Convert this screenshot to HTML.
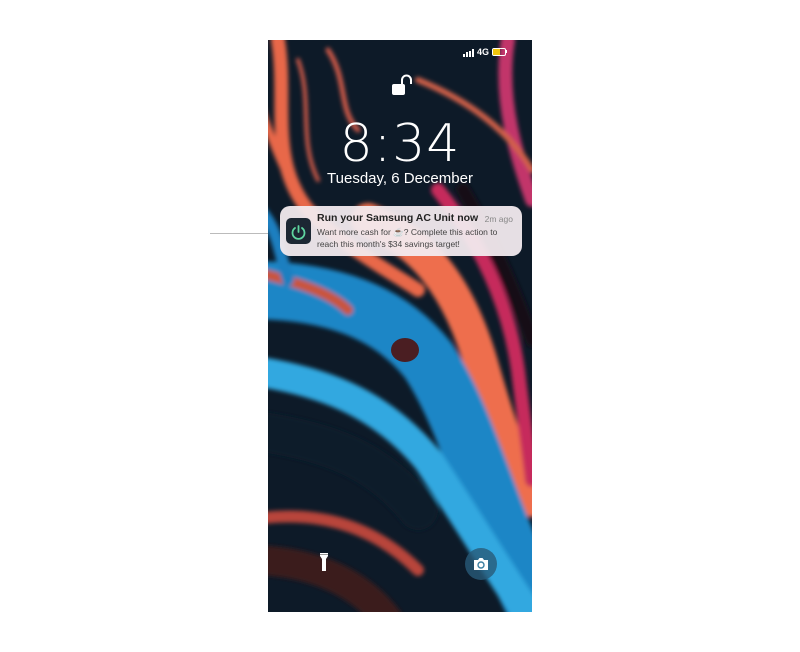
<!DOCTYPE html>
<html><head><style>
body{margin:0;width:800px;height:652px;background:#fff;position:relative;overflow:hidden;font-family:"Liberation Sans",sans-serif}
#ph{position:absolute;left:268px;top:40px;width:264px;height:572px;overflow:hidden;background:#0b1622}
.t{position:absolute;color:#fff;text-align:center;width:264px;left:0}
</style></head><body>
<div style="position:absolute;left:210px;top:233px;width:72px;height:1px;background:#bbb"></div>
<div id="ph">
<svg width="264" height="572" style="position:absolute;left:0;top:0">
<defs><filter id="b"><feGaussianBlur stdDeviation="2"/></filter></defs>
<rect width="264" height="572" fill="#0d1a28"/>
<g filter="url(#b)" fill="none" stroke-linecap="round">
<path d="M240 0 C230 60 250 120 264 160" stroke="#c2366a" stroke-width="14"/>
<path d="M10 0 C20 60 0 120 40 170 C80 210 120 230 150 250" stroke="#e8674a" stroke-width="14"/>
<path d="M-10 60 C10 120 30 170 70 200" stroke="#e8674a" stroke-width="8"/>
<path d="M30 20 C45 60 30 100 50 140" stroke="#d05a48" stroke-width="4"/>
<path d="M60 10 C80 40 70 70 90 90" stroke="#d05a48" stroke-width="5"/>
<path d="M100 180 C150 200 190 240 215 330 C235 400 250 440 264 460" stroke="#ee6e4e" stroke-width="34"/>
<path d="M170 150 C210 200 240 260 250 330 C256 380 262 420 264 440" stroke="#c62a5c" stroke-width="14"/>
<path d="M195 150 C225 200 250 260 264 300" stroke="#140c16" stroke-width="14"/>
<path d="M150 40 C200 60 240 90 264 130" stroke="#d2604a" stroke-width="6"/>
<path d="M-20 250 C60 250 120 270 160 320 C200 380 220 470 264 560" stroke="#1c86c6" stroke-width="58"/>
<path d="M-20 330 C50 340 110 360 160 420 C200 480 230 530 264 580" stroke="#30a8e0" stroke-width="30"/>
<path d="M-20 390 C60 400 110 420 150 470" stroke="#0e1f2a" stroke-width="40"/>
<path d="M-20 480 C40 470 100 480 150 530" stroke="#b8443a" stroke-width="12"/>
<path d="M-20 520 C40 520 90 540 120 580" stroke="#3a1a1e" stroke-width="30"/>
<path d="M-20 230 C20 240 60 250 80 270" stroke="#c9543c" stroke-width="10"/>
<path d="M-20 160 C10 180 10 210 20 240" stroke="#1a7fc0" stroke-width="12"/>
</g>
<ellipse cx="137" cy="310" rx="14" ry="12" fill="#4a1e22"/>
</svg>
<div style="position:absolute;left:195px;top:9px;display:flex;gap:1px;align-items:flex-end">
<div style="width:2px;height:3px;background:#fff"></div><div style="width:2px;height:5px;background:#fff"></div><div style="width:2px;height:6px;background:#fff"></div><div style="width:2px;height:8px;background:#fff"></div></div>
<div style="position:absolute;left:209px;top:7px;color:#fff;font-size:9px;font-weight:bold">4G</div>
<div style="position:absolute;left:224px;top:8px;width:12px;height:6px;border:1px solid #fff;border-radius:2px"><div style="width:7px;height:6px;background:#f2c60d"></div></div>
<div style="position:absolute;left:238px;top:10px;width:1px;height:3px;background:#fff"></div>
<svg style="position:absolute;left:122px;top:34px" width="22" height="28"><path d="M12 10 V6 a4.5 4.5 0 0 1 9 0 V10" fill="none" stroke="#fff" stroke-width="2"/><rect x="2" y="10" width="13" height="11" rx="2" fill="#fff"/></svg>
<div class="t" style="top:74px;font-size:52px;letter-spacing:1px;font-family:'DejaVu Sans','Liberation Sans',sans-serif;font-weight:200">8:34</div>
<div class="t" style="top:130px;font-size:15px">Tuesday, 6 December</div>
<div style="position:absolute;left:12px;top:166px;width:242px;height:50px;border-radius:10px;background:rgba(242,234,238,0.95)">
<div style="position:absolute;left:6px;top:12px;width:25px;height:26px;border-radius:5px;background:#1c2733"></div>
<svg style="position:absolute;left:10px;top:17px" width="17" height="17"><path d="M5 5 A6 6 0 1 0 12 5" fill="none" stroke="#5fd6a0" stroke-width="1.8" stroke-linecap="round"/><path d="M8.5 3 V9" stroke="#5fd6a0" stroke-width="1.8" stroke-linecap="round"/></svg>
<div style="position:absolute;left:37px;top:6px;font-size:10.5px;font-weight:bold;color:#222">Run your Samsung AC Unit now</div>
<div style="position:absolute;right:9px;top:8px;font-size:8.5px;color:#888">2m ago</div>
<div style="position:absolute;left:37px;top:20px;font-size:8.5px;color:#444;line-height:12px">Want more cash for ☕? Complete this action to<br>reach this month's $34 savings target!</div>
</div>
<svg style="position:absolute;left:50px;top:512px" width="12" height="20"><path d="M2 1h8v3l-2 3v12h-4v-12l-2-3z" fill="#fff"/><rect x="2" y="2" width="8" height="1" fill="#999"/></svg>
<div style="position:absolute;left:197px;top:508px;width:32px;height:32px;border-radius:50%;background:rgba(40,90,120,0.8)"></div>
<svg style="position:absolute;left:205px;top:517px" width="16" height="14"><path d="M1 3h4l1.5-2h3L11 3h4v10H1z" fill="#fff"/><circle cx="8" cy="8" r="3" fill="none" stroke="#3a7ea0" stroke-width="1.4"/></svg>
</div>
</body></html>
